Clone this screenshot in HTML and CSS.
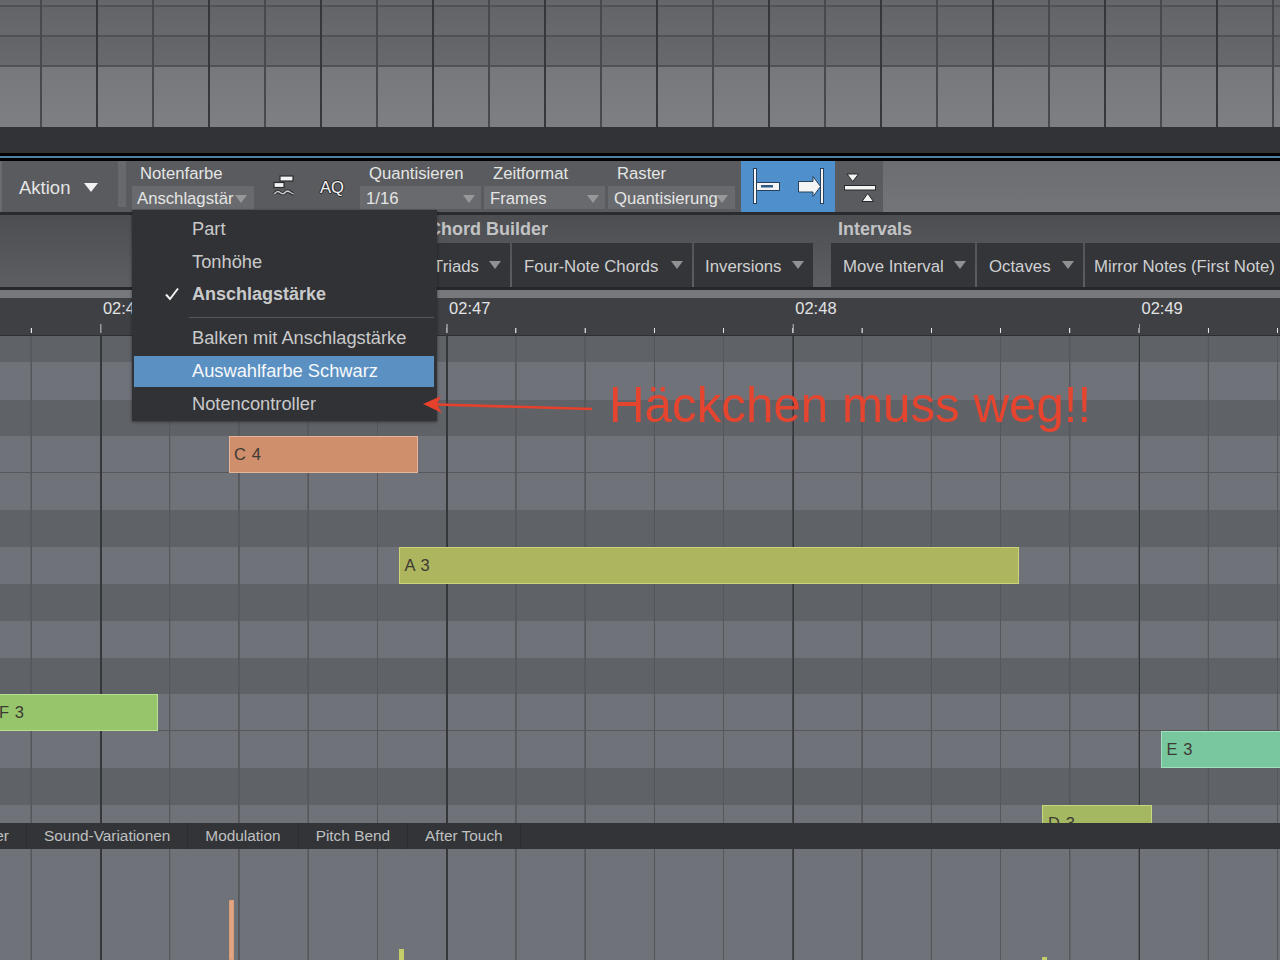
FILE: index.html
```html
<!DOCTYPE html>
<html lang="de">
<head>
<meta charset="utf-8">
<title>Piano Roll</title>
<link rel="stylesheet" href="styles.css">
</head>
<body>
<div class="app">
  <section class="topgrid">
    <div class="trow r6"></div>
    <div class="trow r30"></div>
    <div class="trow r30"></div>
    <div class="trow rlight"></div>
  </section>
  <div class="darkbar"></div>
  <div class="blueline"></div>

  <section class="toolbar">
    <div class="tool-action"><span>Aktion</span><i class="tri tri-big"></i></div>
    <div class="tool-notch"></div>
    <div class="field f-note"><label>Notenfarbe</label><div class="sel"><span>Anschlagstär</span><i class="tri tri-dim tri-tight"></i></div></div>
    <div class="icon-wave">
      <svg width="24" height="26" viewBox="0 0 24 26"><rect x="8" y="2" width="13" height="5" fill="#f4f4f4" stroke="#2c2d30" stroke-width="1.2"/><rect x="2" y="8.5" width="10" height="5" fill="#f4f4f4" stroke="#2c2d30" stroke-width="1.2"/><path d="M2.5 20 Q5 16 8 18.5 T13 18.5 T18 18 T21.5 20" fill="none" stroke="#2c2d30" stroke-width="3.4"/><path d="M2.5 20 Q5 16 8 18.5 T13 18.5 T18 18 T21.5 20" fill="none" stroke="#c9cacb" stroke-width="1.5"/></svg>
    </div>
    <div class="aq">AQ</div>
    <div class="field f-quant"><label>Quantisieren</label><div class="sel"><span>1/16</span><i class="tri tri-dim"></i></div></div>
    <div class="field f-zeit"><label>Zeitformat</label><div class="sel"><span>Frames</span><i class="tri tri-dim"></i></div></div>
    <div class="field f-raster"><label>Raster</label><div class="sel"><span>Quantisierung</span><i class="tri tri-dim tri-tight"></i></div></div>
    <div class="blue-btn">
      <svg width="94" height="51" viewBox="0 0 94 51">
        <rect x="12.5" y="7.5" width="3" height="35" fill="#f4f4f4" stroke="#26405c"/>
        <rect x="15.5" y="21.5" width="23" height="8" fill="#f4f4f4" stroke="#26405c"/>
        <rect x="20" y="24" width="12" height="2.5" fill="#2f5a85"/>
        <path d="M57.5 20.5H72V15.5L79.5 25.5L72 35.5V31H57.5Z" fill="#f4f4f4" stroke="#26405c"/>
        <rect x="79.5" y="7.5" width="3" height="35" fill="#f4f4f4" stroke="#26405c"/>
      </svg>
    </div>
    <div class="fit-btn">
      <svg width="48" height="51" viewBox="0 0 48 51">
        <path d="M12 13H23.5L17.7 20.5Z" fill="#f4f4f4" stroke="#27282b"/>
        <rect x="9.5" y="24.5" width="31" height="4.5" fill="#f4f4f4" stroke="#27282b"/>
        <path d="M27 40.5H38.5L32.7 32.5Z" fill="#f4f4f4" stroke="#27282b"/>
      </svg>
    </div>
    <div class="tool-rest"></div>
  </section>

  <section class="chords">
    <div class="titles"><b class="t-chord">Chord Builder</b><b class="t-int">Intervals</b></div>
    <div class="btns">
      <div class="cb b-triads"><span>Triads</span><i class="tri tri-mid"></i></div>
      <div class="cb b-four"><span>Four-Note Chords</span><i class="tri tri-mid"></i></div>
      <div class="cb b-inv"><span>Inversions</span><i class="tri tri-mid"></i></div>
      <div class="cb b-move"><span>Move Interval</span><i class="tri tri-mid"></i></div>
      <div class="cb b-oct"><span>Octaves</span><i class="tri tri-mid"></i></div>
      <div class="cb b-mirror"><span>Mirror Notes (First Note)</span></div>
    </div>
  </section>

  <div class="scrollbar"></div>
  <section class="ruler">
    <span>02:46</span><span>02:47</span><span>02:48</span><span>02:49</span>
  </section>

  <section class="roll">
    <div class="row d h26"></div>
    <div class="row l h38"></div>
    <div class="row d h36"></div>
    <div class="row l line h37"></div>
    <div class="row l h37"></div>
    <div class="row d h37"></div>
    <div class="row l h37"></div>
    <div class="row d h37"></div>
    <div class="row l h37"></div>
    <div class="row d h36"></div>
    <div class="row l line h37"></div>
    <div class="row l h37"></div>
    <div class="row d h37"></div>
    <div class="row l h18"></div>
    <div class="note n-c4">C 4</div>
    <div class="note n-a3">A 3</div>
    <div class="note n-f3">F 3</div>
    <div class="note n-e3">E 3</div>
    <div class="note n-d3">D 3</div>
  </section>

  <nav class="tabs">
    <span class="tab t0">er</span>
    <span class="tab">Sound-Variationen</span>
    <span class="tab">Modulation</span>
    <span class="tab">Pitch Bend</span>
    <span class="tab">After Touch</span>
  </nav>

  <section class="lower">
    <i class="vel v1"></i><i class="vel v2"></i><i class="vel v3"></i>
  </section>

  <div class="menu">
    <div class="mi">Part</div>
    <div class="mi">Tonhöhe</div>
    <div class="mi checked"><svg class="check" width="16" height="14" viewBox="0 0 16 14"><path d="M2 7.5L6 12L14 1.5" fill="none" stroke="#f2f2f2" stroke-width="2"/></svg>Anschlagstärke</div>
    <div class="msep"></div>
    <div class="mi">Balken mit Anschlagstärke</div>
    <div class="mi active">Auswahlfarbe Schwarz</div>
    <div class="mi">Notencontroller</div>
  </div>

  <svg class="arrow" width="180" height="20" viewBox="0 0 180 20"><path d="M15 8.5L170 13" stroke="#e5412c" stroke-width="2.6" fill="none"/><path d="M1 8L19 0L15 8.5L20 17Z" fill="#e5412c"/></svg>
  <div class="annot">Häckchen muss weg!!</div>
</div>
</body>
</html>
```

FILE: styles.css
```css
* { box-sizing: border-box; }
html, body { margin: 0; padding: 0; background: #333437; }
.app {
  position: relative; width: 1280px; height: 960px; overflow: hidden;
  display: flex; flex-direction: column;
  font-family: "Liberation Sans", Arial, sans-serif; color: #e4e5e5;
}
.tri { display: inline-block; width: 0; height: 0; border-style: solid; border-color: #aaacae transparent transparent; }
.tri-big { border-width: 9px 7.5px 0; border-top-color: #f2f2f2; }
.tri-dim { border-width: 8px 6px 0; border-top-color: #96989a; }
.tri-mid { border-width: 8px 6px 0; border-top-color: #8f9193; }

/* top grid */
.topgrid { position: relative; height: 127px; flex: none; display: flex; flex-direction: column; }
.topgrid::after {
  content: ""; position: absolute; inset: 0;
  background:
    repeating-linear-gradient(90deg, transparent 0, transparent 96px, #36373a 96.4px, #36373a 97.6px, transparent 98px, transparent 112px),
    repeating-linear-gradient(90deg, transparent 0, transparent 40px, #47494c 40.4px, #47494c 41.6px, transparent 42px, transparent 56px);
}
.trow { flex: none; border-bottom: 2px solid #505256; background: linear-gradient(#626468, #67696c); }
.r6 { height: 7px; }
.r30 { height: 30px; }
.rlight { flex: 1; border: 0; background: linear-gradient(#77787c, #7e7f83); }
.darkbar { height: 26px; flex: none; background: #323336; }
.blueline { height: 8px; flex: none; background: linear-gradient(#000 0 3px, #4f7fa3 3px 5px, #000 5px); }

/* toolbar */
.toolbar { height: 51px; flex: none; display: flex; background: #5a5b5e; font-size: 16.7px; }
.tool-action { width: 118px; flex: none; display: flex; align-items: center; gap: 14px; padding: 2px 0 0 17px; font-size: 18.5px; border-left: 2px solid #6a6b6e; }
.tool-notch { width: 8px; flex: none; background: #68696c; margin-bottom: 5px; }
.field { flex: none; display: flex; flex-direction: column; }
.field label { height: 25px; line-height: 26px; white-space: nowrap; }
.sel { height: 23px; background: #696a6d; display: flex; align-items: center; justify-content: space-between; white-space: nowrap; padding: 2px 0 0 6px; }
.tri-tight { margin: 0 7px 0 -10px; }
.sel .tri:not(.tri-tight) { margin-right: 6px; }
.f-note { width: 122px; margin-left: 6px; }
.f-note label { padding-left: 8px; }
.f-note .sel { padding-left: 5px; }
.icon-wave { width: 60px; flex: none; display: flex; align-items: center; justify-content: center; margin-top: 1px; }
.aq { width: 46px; flex: none; align-self: center; padding: 2px 0 0 6px; font-size: 16.6px; color: #f2f2f2; text-shadow: 1px 0 #25262a, -1px 0 #25262a, 0 1px #25262a, 0 -1px #25262a; }
.f-quant { width: 121px; }
.f-quant label { padding-left: 9px; }
.f-zeit { width: 121px; margin-left: 3px; }
.f-zeit label { padding-left: 9px; }
.f-raster { width: 127px; margin-left: 3px; }
.f-raster label { padding-left: 9px; }
.blue-btn { width: 94px; flex: none; margin-left: 6px; background: #4f90cc; height: 51px; }
.blue-btn svg, .fit-btn svg { display: block; }
.fit-btn { width: 48px; flex: none; }
.tool-rest { flex: 1; background: linear-gradient(#6b6d70, #737578); }

/* chords */
.chords { height: 78px; flex: none; border-top: 3px solid #2a2b2e; border-bottom: 3px solid #26272a; background: linear-gradient(#4d4e51, #5d5e61); display: flex; flex-direction: column; }
.titles { height: 28px; flex: none; display: flex; font-size: 18px; line-height: 28px; color: #c2c3c4; padding-left: 428px; }
.t-chord { width: 410px; }
.btns { display: flex; height: 44px; font-size: 16.8px; color: #cfd0d1; }
.cb { flex: none; background: #343539; display: flex; align-items: center; justify-content: space-between; margin-right: 2px; white-space: nowrap; padding: 3px 9px 0 12px; }
.cb .tri { margin-top: -3px; }
.b-triads { width: 89px; margin-left: 421px; padding-left: 12px; }
.b-four { width: 180px; }
.b-inv { width: 119px; margin-right: 18px; padding-left: 11px; }
.b-move { width: 144px; }
.b-oct { width: 106px; }
.b-mirror { flex: 1; margin: 0; padding-left: 9px; }

.scrollbar { height: 8px; flex: none; background: #77787b; }
/* ruler */
.ruler { height: 38px; flex: none; position: relative; background: #3f4043; display: flex; padding-left: 102.9px; font-size: 16.5px; color: #e2e3e3; border-bottom: 1px solid #2e2f32; }
.ruler span { width: 346.2px; flex: none; padding-top: 1px; line-height: 18px; }
.ruler::after {
  content: ""; position: absolute; left: 0; right: 0; bottom: 2px; height: 9px;
  background:
    repeating-linear-gradient(90deg, transparent 0, transparent 99.9px, #9a9b9d 100.4px, #9a9b9d 101.2px, transparent 101.8px, transparent 346.2px),
    repeating-linear-gradient(90deg, transparent 0, transparent 30.4px, #e6e6e6 30.9px, #e6e6e6 31.5px, transparent 32px, transparent 69.24px) 0 4px / 100% 5px no-repeat;
}

/* roll */
.roll, .lower { position: relative; overflow: hidden; }
.roll { height: 487px; flex: none; }
.roll::before, .lower::before {
  content: ""; position: absolute; inset: 0;
  background:
    repeating-linear-gradient(90deg, transparent 0, transparent 99.9px, #36373a 100.3px, #36373a 101.5px, transparent 101.9px, transparent 346.2px),
    repeating-linear-gradient(90deg, transparent 0, transparent 30.3px, #55575b 30.7px, #55575b 31.7px, transparent 32.1px, transparent 69.24px);
}
.row.l { background: #6f7278; }
.row.d { background: #5f6267; }
.row.line { border-bottom: 1px solid #56585c; }
.h18 { height: 18px; } .h26 { height: 26px; } .h36 { height: 36px; } .h37 { height: 37px; } .h38 { height: 38px; }
.note { position: absolute; height: 37px; line-height: 34px; font-size: 16.5px; color: #3d3a35; padding-left: 4px; border: 1.5px solid; white-space: nowrap; letter-spacing: .6px; }
.n-c4 { left: 229px; top: 100px; width: 189px; background: #cf8e6c; border-color: #e6b497; }
.n-a3 { left: 398.5px; top: 211px; width: 620px; background: #adb55f; border-color: #cfd479; padding-left: 5px; }
.n-f3 { left: -6px; top: 358px; width: 164px; background: #96c56b; border-color: #b8de90; }
.n-e3 { left: 1160.5px; top: 395px; width: 130px; background: #79c79f; border-color: #a0e0bf; padding-left: 5px; }
.n-d3 { left: 1042px; top: 469px; width: 110px; background: #a4b862; border-color: #c8d880; padding-left: 5px; }

/* tabs */
.tabs { height: 26px; flex: none; display: flex; background: #333437; font-size: 15.4px; line-height: 26px; color: #bfc0c1; position: relative; }
.tab { padding: 0 17px; border-right: 1px solid #2b2c2f; white-space: nowrap; }
.t0 { width: 27px; padding: 0 17px 0 0; text-align: right; direction: rtl; }

.lower { flex: 1; background: #6f7278; }
.vel { position: absolute; bottom: 0; width: 5px; border: 1px solid; }
.v1 { left: 229px; height: 60px; background: #e3a583; border-color: #d99a76; }
.v2 { left: 398.5px; height: 11px; background: #c5cc6a; border-color: #c5cc6a; }
.v3 { left: 1042px; height: 3px; background: #c5cc6a; border-color: #c5cc6a; }

/* menu */
.menu { position: absolute; left: 132px; top: 210px; width: 305px; height: 211px; background: #313235; box-shadow: 0 1px 3px rgba(0,0,0,.45); padding: 2px 3px 0 2px; font-size: 18.3px; color: #c9cacb; }
.mi { position: relative; height: 33px; line-height: 33px; padding-left: 58px; white-space: nowrap; }
.mi.checked { font-weight: bold; font-size: 18px; }
.check { position: absolute; left: 30px; top: 9px; }
.msep { height: 1px; margin: 6px 0 3px 55px; background: #56575a; }
.mi.active { background: #5b90c2; color: #f6f8fa; height: 31px; line-height: 29px; margin-top: 2px; }

.arrow { position: absolute; left: 422px; top: 396px; }
.annot { position: absolute; left: 609px; top: 377px; font-size: 49.3px; line-height: 56px; color: #e5442f; white-space: nowrap; }
```
